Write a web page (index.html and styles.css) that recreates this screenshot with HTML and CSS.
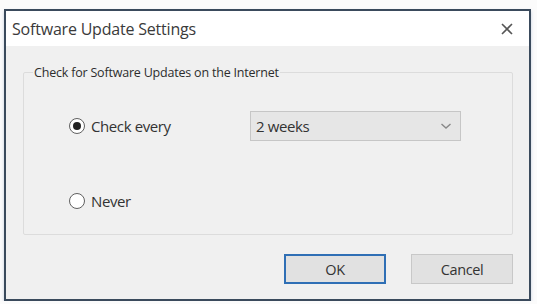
FILE: index.html
```html
<!DOCTYPE html>
<html>
<head>
<meta charset="utf-8">
<link rel="stylesheet" href="styles.css">
</head>
<body>
<div class="window">
  <div class="titlebar">
    <span class="title">Software Update Settings</span>
    <svg class="close" width="12" height="12" viewBox="0 0 12 12"><path d="M1 1L11 11M11 1L1 11" stroke="#555" stroke-width="1.6" fill="none"/></svg>
  </div>
  <div class="content">
    <fieldset class="group">
      <legend class="legend">Check for Software Updates on the Internet</legend>
      <div class="row row-first">
        <label class="radio"><span class="dot checked"></span>Check every</label>
        <div class="select"><span>2 weeks</span><svg width="12" height="8" viewBox="0 0 12 8"><path d="M1.5 2L6 6L10.5 2" stroke="#888" stroke-width="1.4" fill="none"/></svg></div>
      </div>
      <div class="row row-second">
        <label class="radio"><span class="dot"></span>Never</label>
      </div>
    </fieldset>
    <div class="buttons">
      <button class="btn btn-default">OK</button>
      <button class="btn">Cancel</button>
    </div>
  </div>
</div>
</body>
</html>
```
FILE: styles.css
```css
html, body {
  margin: 0;
  padding: 0;
  background: #fbfbfb;
}
body {
  padding: 9px 0 0 4px;
  font-family: "Open Sans", "Noto Sans", sans-serif;
  color: #2a2a2a;
}
.window {
  width: 523px;
  height: 288px;
  border: 2px solid #3a4a5c;
  background: #f0f0f0;
  display: flex;
  flex-direction: column;
  box-shadow: 0 2px 3px rgba(150,170,200,0.5);
}
.titlebar {
  height: 35px;
  background: #fff;
  display: flex;
  align-items: center;
  justify-content: space-between;
  padding: 0 16px 0 6px;
}
.title {
  font-size: 16px;
  color: #3a3a3a;
  letter-spacing: -0.2px;
}
.close {
  margin-top: 0;
}
.content {
  flex: 1;
  padding: 18px 16px 0 17px;
  display: flex;
  flex-direction: column;
}
.group {
  margin: 0;
  padding: 0;
  height: 171px;
  border: 1px solid #dcdcdc;
  border-radius: 2px;
  box-sizing: border-box;
}
.legend {
  font-size: 12.5px;
  padding: 0 1px;
  margin-left: 9px;
  letter-spacing: -0.2px;
  color: #2d2d2d;
}
.row {
  display: flex;
  align-items: center;
  padding-left: 45px;
}
.row-first {
  margin-top: 30px;
}
.row-second {
  margin-top: 50px;
}
.radio {
  display: flex;
  align-items: center;
  font-size: 15px;
  letter-spacing: -0.4px;
  width: 181px;
  color: #333;
}
.dot {
  width: 16px;
  height: 16px;
  border: 1.5px solid #606060;
  border-radius: 50%;
  box-sizing: border-box;
  margin-right: 6px;
  background: #fff;
  display: flex;
  align-items: center;
  justify-content: center;
}
.dot.checked::after {
  content: "";
  width: 8px;
  height: 8px;
  border-radius: 50%;
  background: #222;
}
.select {
  width: 211px;
  height: 30px;
  box-sizing: border-box;
  border: 1px solid #c6c6c6;
  background: #e6e6e6;
  display: flex;
  align-items: center;
  justify-content: space-between;
  padding: 0 8px 0 5px;
  font-size: 15px;
  letter-spacing: -0.4px;
  color: #333;
}
.buttons {
  display: flex;
  justify-content: flex-end;
  gap: 25px;
  margin-top: 19px;
}
.btn {
  width: 102px;
  height: 30px;
  box-sizing: border-box;
  border: 1px solid #c8c8c8;
  background: #e1e1e1;
  font-family: "Open Sans", "Noto Sans", sans-serif;
  font-size: 14.5px;
  letter-spacing: -0.4px;
  color: #333;
  padding: 0;
}
.btn-default {
  border: 2px solid #2f6fb5;
}
```
